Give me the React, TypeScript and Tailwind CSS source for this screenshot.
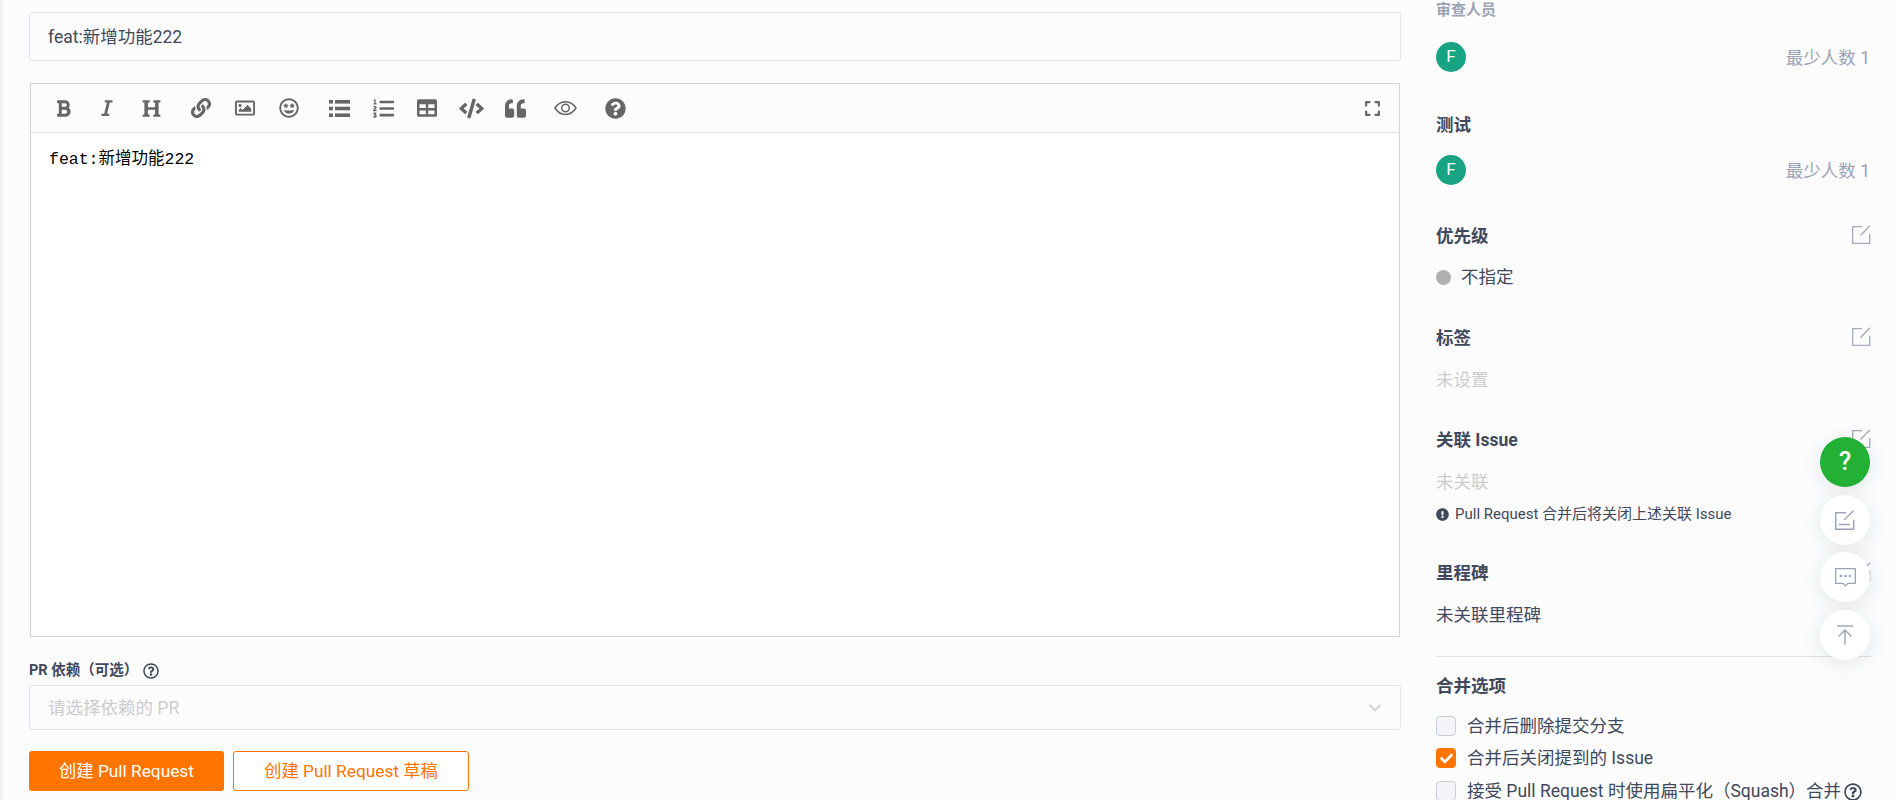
import type { ReactNode } from 'react'
import {
  FaBold,
  FaItalic,
  FaHeading,
  FaLink,
  FaRegImage,
  FaRegGrinStars,
  FaListOl,
  FaTable,
  FaCode,
  FaQuoteLeft,
  FaQuestionCircle,
  FaRegQuestionCircle,
  FaExclamationCircle,
  FaExpand,
  FaCheck,
  FaChevronDown,
} from 'react-icons/fa'

const sans = 'font-["Roboto","Noto_Sans_CJK_SC",sans-serif]'

function ToolButton({ children, gap }: { children: ReactNode; gap?: boolean }) {
  return (
    <span className={`flex h-[30px] w-[44px] items-center justify-center text-[#666666] ${gap ? 'ml-[6px]' : ''}`}>
      {children}
    </span>
  )
}

function EditIcon() {
  return (
    <svg className="-mt-[4px]" width="19" height="19" viewBox="0 0 19 19" fill="none" stroke="#a3aabd" strokeWidth="1.3">
      <path d="M10 1.7H.7v16.6h17V9" />
      <path d="M8.5 10.5 18 .8" />
    </svg>
  )
}

function Heading({ children, edit, className }: { children: ReactNode; edit?: boolean; className: string }) {
  return (
    <div className={`flex h-[26px] items-center justify-between pt-[2px] text-[17.5px] font-bold text-[#40485b] ${className}`}>
      <span>{children}</span>
      {edit && <EditIcon />}
    </div>
  )
}

function Avatar({ className }: { className: string }) {
  return (
    <div className={`flex h-[30px] items-center justify-between ${className}`}>
      <span className="flex h-[30px] w-[30px] items-center justify-center rounded-full bg-[#18a383] text-[17px] text-white">F</span>
      <span className="pr-[1px] pt-[2px] text-[17.5px] text-[#9aa2b5]">最少人数 1</span>
    </div>
  )
}

function CheckRow({ checked, children, className }: { checked?: boolean; children: ReactNode; className: string }) {
  return (
    <div className={`flex h-[26px] items-center text-[17.5px] text-[#40485b] ${className}`}>
      {checked ? (
        <span className="flex h-[20px] w-[20px] items-center justify-center rounded-[4px] bg-[#ff7500] text-white">
          <FaCheck size={13} />
        </span>
      ) : (
        <span className="h-[20px] w-[20px] rounded-[4px] border border-[#c9cdd8] bg-[#f5f5f8]" />
      )}
      <span className="ml-[11px] flex items-center pt-[1px] [text-spacing-trim:space-all]">{children}</span>
    </div>
  )
}

function Fab({ children, green }: { children: ReactNode; green?: boolean }) {
  return (
    <div
      className={`flex h-[50px] w-[50px] items-center justify-center rounded-full shadow-[0_4px_20px_rgba(60,70,90,0.12)] ${green ? 'bg-[#22b035] text-white' : 'bg-white'}`}
    >
      {children}
    </div>
  )
}

export default function App() {
  return (
    <div className={`relative flex h-[800px] w-[1895px] overflow-hidden bg-[#fcfcfd] ${sans}`}>
      <div className="h-full w-[3px] bg-[#f2f3f5]" />

      {/* main form */}
      <div className="ml-[26px] w-[1372px] pt-[12px]">
        <div className="flex h-[49px] items-center rounded-[3px] border border-[#e5e6ec] px-[18px] pt-[2px] text-[17.5px] text-[#40485b]">
          feat:新增功能222
        </div>

        <div className="mx-[1px] mt-[22px] h-[554px] border border-[#d2d3dc]">
          <div className="flex h-[49px] items-center border-b border-[#dfe0e6] pl-[10px] pr-[18px]">
            <ToolButton><FaBold size={19} /></ToolButton>
            <ToolButton><FaItalic size={18} /></ToolButton>
            <ToolButton><FaHeading size={19} /></ToolButton>
            <ToolButton gap><FaLink size={20} /></ToolButton>
            <ToolButton><FaRegImage size={20} /></ToolButton>
            <ToolButton><FaRegGrinStars size={20} /></ToolButton>
            <ToolButton gap>
              <svg width="21" height="17" viewBox="0 0 21 17" fill="currentColor">
                <rect x="0" y="0" width="4" height="3.6" />
                <rect x="0" y="6.7" width="4" height="3.6" />
                <rect x="0" y="13.4" width="4" height="3.6" />
                <rect x="6" y="0" width="15" height="3.6" />
                <rect x="6" y="6.7" width="15" height="3.6" />
                <rect x="6" y="13.4" width="15" height="3.6" />
              </svg>
            </ToolButton>
            <ToolButton><FaListOl size={21} /></ToolButton>
            <ToolButton><FaTable size={20} /></ToolButton>
            <ToolButton><FaCode size={25} /></ToolButton>
            <ToolButton><FaQuoteLeft size={21} /></ToolButton>
            <ToolButton gap>
              <svg width="23" height="16" viewBox="0 0 23 16" fill="none" stroke="currentColor" strokeWidth="1.5">
                <path d="M1 8c5-8.5 16-8.5 21 0-5 8.5-16 8.5-21 0z" />
                <circle cx="11.5" cy="8" r="3.8" />
              </svg>
            </ToolButton>
            <ToolButton gap><FaQuestionCircle size={21} /></ToolButton>
            <span className="ml-auto text-[#666666]"><FaExpand size={17} /></span>
          </div>
          <div className='h-[503px] bg-white px-[18px] py-[14px] font-["Liberation_Mono","Noto_Sans_CJK_SC",monospace] text-[16.5px] leading-[26px] text-black'>
            feat:新增功能222
          </div>
        </div>

        <div className="mt-[23px] flex h-[20px] items-center pt-[2px] text-[14.5px] font-bold text-[#40485b]">
          PR 依赖（可选）
          <FaRegQuestionCircle size={16} className="ml-[5px]" />
        </div>
        <div className="mt-[5px] flex h-[45px] items-center justify-between rounded-[3px] border border-[#e5e6ec] px-[18px] text-[17.5px] text-[#cccccc]">
          <span className="pt-[1px]">请选择依赖的 PR</span>
          <FaChevronDown size={14} className="text-[#d5d5d5]" />
        </div>

        <div className="mt-[21px] flex gap-[9px] text-[17.3px]">
          <button className="h-[40px] w-[195px] rounded-[3px] bg-[#ff7500] pt-[1px] text-white">创建 Pull Request</button>
          <button className="h-[40px] w-[236px] rounded-[3px] border border-[#ff7500] bg-white pt-[1px] text-[#ff7500]">创建 Pull Request 草稿</button>
        </div>
      </div>

      {/* sidebar */}
      <div className="ml-[35px] w-[435px]">
        <div className="flex h-[20px] items-center text-[15px] font-bold text-[#9aa2b5]">审查人员</div>
        <Avatar className="mt-[22px]" />
        <Heading className="mt-[39px]">测试</Heading>
        <Avatar className="mt-[18px]" />

        <Heading edit className="mt-[37px]">优先级</Heading>
        <div className="mt-[16px] flex h-[26px] items-center text-[17.5px] text-[#40485b]">
          <span className="mr-[10px] h-[15px] w-[15px] rounded-full bg-[#b0b0b0]" />
          <span className="pt-[1px]">不指定</span>
        </div>

        <Heading edit className="mt-[34px]">标签</Heading>
        <div className="mt-[16px] h-[26px] pt-[1px] text-[17.5px] leading-[26px] text-[#cccccc]">未设置</div>

        <Heading edit className="mt-[34px]">关联 Issue</Heading>
        <div className="mt-[16px] h-[26px] pt-[1px] text-[17.5px] leading-[26px] text-[#cccccc]">未关联</div>
        <div className="mt-[10px] flex h-[20px] items-center text-[15px] text-[#40485b]">
          <FaExclamationCircle size={13} className="mr-[6px]" />
          Pull Request 合并后将关闭上述关联 Issue
        </div>

        <Heading edit className="mt-[35px]">里程碑</Heading>
        <div className="mt-[16px] h-[26px] pt-[1px] text-[17.5px] leading-[26px] text-[#40485b]">未关联里程碑</div>

        <div className="mt-[29px] h-px bg-[#dfe2ea]" />

        <Heading className="mt-[15px]">合并选项</Heading>
        <CheckRow className="mt-[15px]">合并后删除提交分支</CheckRow>
        <CheckRow checked className="mt-[6px]">合并后关闭提到的 Issue</CheckRow>
        <CheckRow className="mt-[7px]">
          接受 Pull Request 时使用扁平化（Squash）合并
          <FaRegQuestionCircle size={18} className="ml-[3px]" />
        </CheckRow>
      </div>

      {/* floating buttons */}
      <div className="absolute left-[1820px] top-[437px] flex flex-col gap-[7.5px]">
        <Fab green><span className="text-[25px] font-medium">?</span></Fab>
        <Fab>
          <svg width="20" height="20" viewBox="0 0 20 20" fill="none" stroke="#9aa2b5" strokeWidth="1.4">
            <path d="M11 2.7H.7v16.6h18V10" />
            <path d="M9 10 18.5.8" />
            <path d="M4 14.5h11" />
          </svg>
        </Fab>
        <Fab>
          <svg width="21" height="19" viewBox="0 0 21 19" fill="none" stroke="#9aa2b5" strokeWidth="1.3">
            <path d="M.7.7h19.6v14.6h-7.3l-2.5 2.6-2.5-2.6H.7z" />
            <circle cx="6" cy="8" r=".7" fill="#9aa2b5" />
            <circle cx="10.5" cy="8" r=".7" fill="#9aa2b5" />
            <circle cx="15" cy="8" r=".7" fill="#9aa2b5" />
          </svg>
        </Fab>
        <Fab>
          <svg width="18" height="20" viewBox="0 0 18 20" fill="none" stroke="#9aa2b5" strokeWidth="1.4">
            <path d="M1 1h16" />
            <path d="M9 19.5V5M2.5 11.5 9 5l6.5 6.5" />
          </svg>
        </Fab>
      </div>
    </div>
  )
}
